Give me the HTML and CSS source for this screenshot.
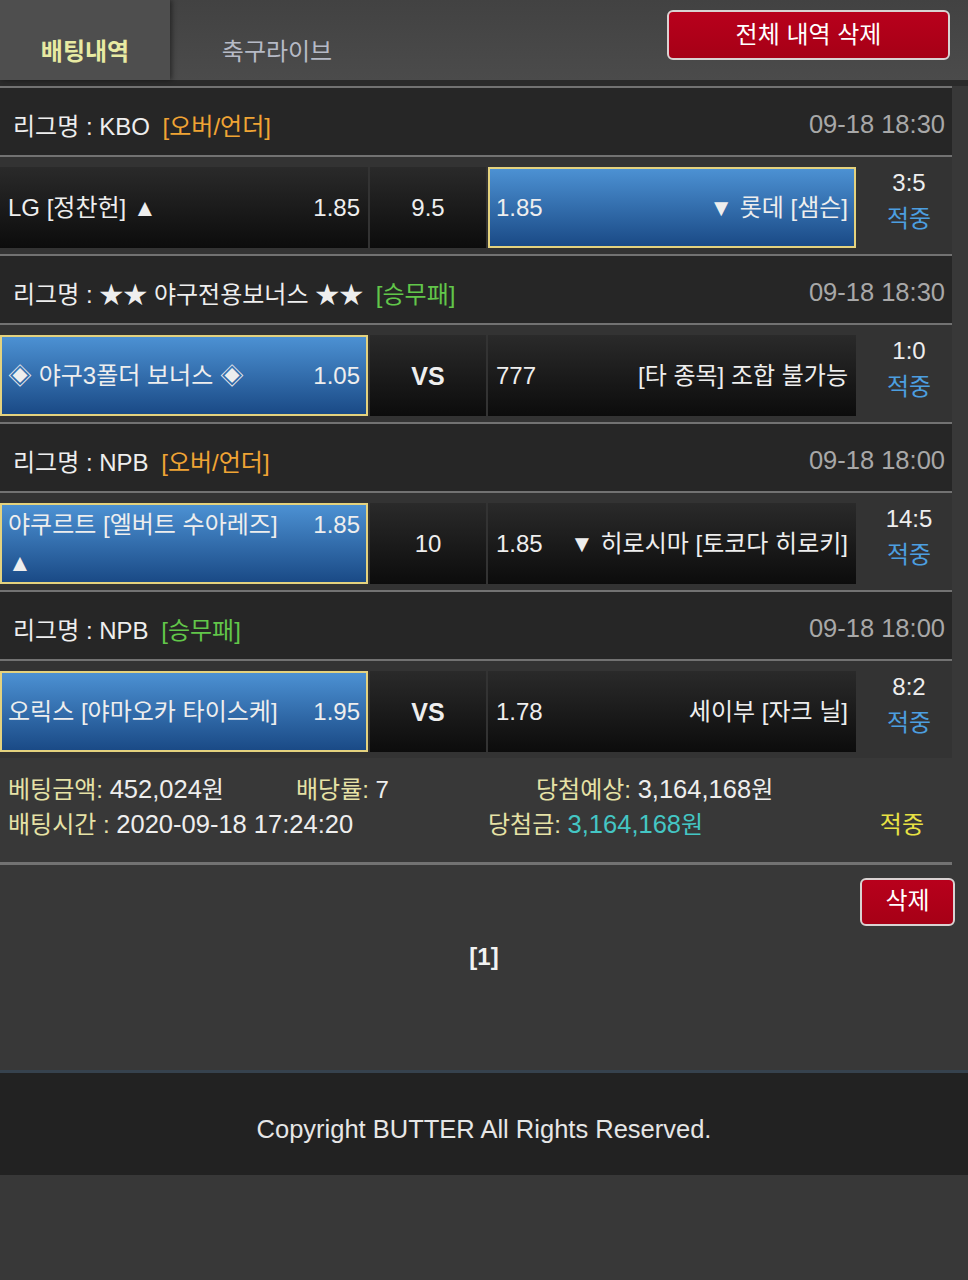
FILE: index.html
```html
<!DOCTYPE html>
<html lang="ko">
<head>
  <meta charset="UTF-8">
  <meta name="viewport" content="width=device-width, initial-scale=1.0">
  <title>배팅내역</title>
  <link rel="stylesheet" href="styles.css">
</head>
<body>
  <div class="top">
    <div class="tabs">
      <a class="tab on">배팅내역</a>
      <a class="tab">축구라이브</a>
    </div>
    <a class="btn-red btn-all">전체 내역 삭제</a>
  </div>
  <div class="strip"></div>

  <div class="list">
    <div class="bet">
      <div class="league">
        <span>리그명 : KBO <span class="orange">[오버/언더]</span></span>
        <span class="date">09-18 18:30</span>
      </div>
      <div class="match">
        <div class="cell home"><div class="in"><span class="odd">1.85</span>LG [정찬헌] ▲</div></div>
        <div class="cell mid">9.5</div>
        <div class="cell away sel"><div class="in"><span class="odd">1.85</span>▼ 롯데 [샘슨]</div></div>
        <div class="result"><div>3:5</div><div class="hit">적중</div></div>
      </div>
    </div>

    <div class="bet">
      <div class="league">
        <span>리그명 : ★★ 야구전용보너스 ★★ <span class="green">[승무패]</span></span>
        <span class="date">09-18 18:30</span>
      </div>
      <div class="match">
        <div class="cell home sel"><div class="in"><span class="odd">1.05</span>◈ 야구3폴더 보너스 ◈</div></div>
        <div class="cell mid vs">VS</div>
        <div class="cell away"><div class="in"><span class="odd">777</span>[타 종목] 조합 불가능</div></div>
        <div class="result"><div>1:0</div><div class="hit">적중</div></div>
      </div>
    </div>

    <div class="bet">
      <div class="league">
        <span>리그명 : NPB <span class="orange">[오버/언더]</span></span>
        <span class="date">09-18 18:00</span>
      </div>
      <div class="match">
        <div class="cell home sel"><div class="in"><span class="odd">1.85</span>야쿠르트 [엘버트 수아레즈] ▲</div></div>
        <div class="cell mid">10</div>
        <div class="cell away"><div class="in"><span class="odd">1.85</span>▼ 히로시마 [토코다 히로키]</div></div>
        <div class="result"><div>14:5</div><div class="hit">적중</div></div>
      </div>
    </div>

    <div class="bet">
      <div class="league">
        <span>리그명 : NPB <span class="green">[승무패]</span></span>
        <span class="date">09-18 18:00</span>
      </div>
      <div class="match">
        <div class="cell home sel"><div class="in"><span class="odd">1.95</span>오릭스 [야마오카 타이스케]</div></div>
        <div class="cell mid vs">VS</div>
        <div class="cell away"><div class="in"><span class="odd">1.78</span>세이부 [자크 닐]</div></div>
        <div class="result"><div>8:2</div><div class="hit">적중</div></div>
      </div>
    </div>

    <div class="summary">
      <div class="sum-row first">
        <span><span class="lbl">베팅금액:</span> <span class="num">452,024</span>원</span>
        <span><span class="lbl">배당률:</span> 7</span>
        <span><span class="lbl">당첨예상:</span> <span class="num">3,164,168</span>원</span>
      </div>
      <div class="sum-row second">
        <span><span class="lbl">배팅시간 :</span> <span class="num">2020-09-18 17:24:20</span></span>
        <span><span class="lbl">당첨금:</span> <span class="cyan"><span class="num">3,164,168</span>원</span></span>
        <span class="yellow">적중</span>
      </div>
    </div>
  </div>

  <div class="actions">
    <a class="btn-red btn-del">삭제</a>
  </div>
  <div class="paging">[1]</div>

  <div class="footer">Copyright BUTTER All Rights Reserved.</div>
</body>
</html>
```

FILE: styles.css
```css
* {
  box-sizing: border-box;
}

body {
  margin: 0;
  padding: 0;
  background-color: #383838;
  font-family: "Liberation Sans", "Noto Sans CJK KR", sans-serif;
  font-size: 24px;
  color: #eeeeee;
}

/* header */
.top {
  height: 80px;
  display: flex;
  justify-content: space-between;
  align-items: flex-start;
  background: linear-gradient(#424242, #4b4b4b);
}

.tabs {
  display: flex;
  height: 80px;
}

.tab {
  display: block;
  height: 80px;
  padding-top: 36px;
  line-height: 32px;
  text-align: center;
  color: #b6bac6;
  width: 214px;
}

.tab.on {
  width: 170px;
  background-color: #4e4e4e;
  box-shadow: 2px 0 5px rgba(0, 0, 0, 0.45);
  color: #e8eaa2;
  font-weight: bold;
}

.btn-red {
  display: block;
  text-align: center;
  color: #ffffff;
  background: linear-gradient(#b8001c, #a60016);
  border: 2px solid #d9d2d2;
  border-radius: 6px;
}

.btn-all {
  width: 283px;
  height: 50px;
  margin: 10px 18px 0 0;
  line-height: 46px;
}

.strip {
  height: 6px;
  background-color: #2a2a2a;
}

/* bet list */
.list {
  width: 952px;
}

.bet {
  border-top: 2px solid #727272;
}

.league {
  height: 69px;
  display: flex;
  justify-content: space-between;
  align-items: center;
  padding: 6px 7px 0 13px;
  background-color: #262626;
  border-bottom: 2px solid #727272;
}

.orange {
  color: #f0a434;
  margin-left: 6px;
}

.green {
  color: #62c64a;
  margin-left: 6px;
}

.date {
  color: #a8a8a8;
  font-size: 25.5px;
}

.match {
  height: 97px;
  display: flex;
  padding: 10px 0 6px;
  background-color: #333333;
}

.cell {
  height: 81px;
  display: flex;
  align-items: center;
  padding: 0 8px;
  line-height: 38px;
  background: linear-gradient(#2a2a2a, #0c0c0c);
}

.home,
.away {
  width: 368px;
}

.mid {
  width: 116px;
  margin: 0 2px;
  justify-content: center;
}

.vs {
  font-weight: bold;
  font-size: 25px;
}

.sel {
  background: linear-gradient(#4c91d3, #1a4a86);
  border: 2px solid #e4d27e;
  padding: 0 6px;
}

.in {
  width: 100%;
}

.home .odd {
  float: right;
  margin-left: 20px;
}

.away .in {
  text-align: right;
}

.away .odd {
  float: left;
  margin-right: 20px;
}

.result {
  width: 96px;
  padding-left: 10px;
  margin-top: -2px;
  text-align: center;
  line-height: 36px;
}

.hit {
  color: #4c9fe0;
}

/* summary */
.summary {
  padding: 14px 28px 20px 8px;
  border-bottom: 3px solid #727272;
  line-height: 35px;
}

.sum-row {
  display: flex;
}

.sum-row .num {
  font-size: 25.5px;
}

.first > span:nth-child(1) {
  width: 288px;
}

.first > span:nth-child(2) {
  width: 240px;
}

.second > span:nth-child(1) {
  width: 480px;
}

.second > span:nth-child(2) {
  flex: 1;
}

.lbl {
  color: #e6e2a6;
}

.cyan {
  color: #44c6c4;
}

.yellow {
  color: #e8e244;
}

/* bottom */
.actions {
  display: flex;
  justify-content: flex-end;
  padding: 13px 13px 0 0;
}

.btn-del {
  width: 95px;
  height: 48px;
  line-height: 42px;
}

.paging {
  margin-top: 17px;
  text-align: center;
  font-weight: bold;
  color: #f2f2f2;
}

.footer {
  margin-top: 99px;
  height: 105px;
  padding-top: 38px;
  line-height: 36px;
  text-align: center;
  background-color: #222222;
  border-top: 3px solid #36424e;
  color: #e6e6e6;
  font-size: 25.5px;
}
```
